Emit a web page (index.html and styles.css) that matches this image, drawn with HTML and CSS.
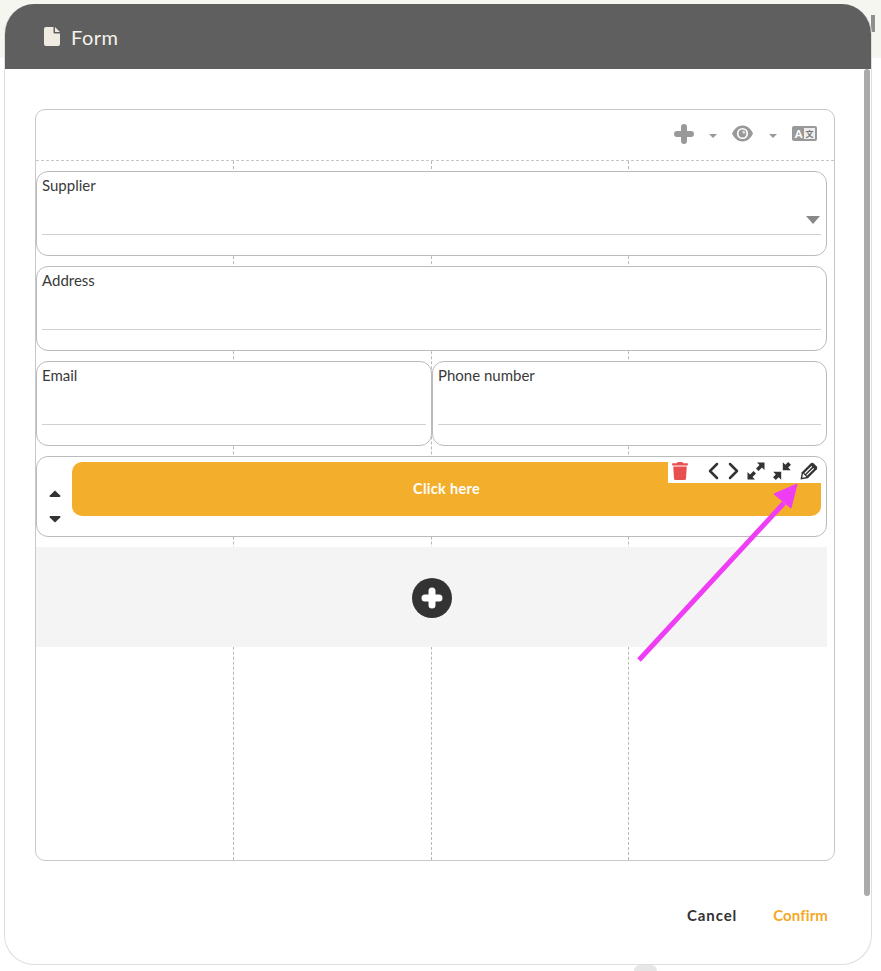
FILE: index.html
```html
<!DOCTYPE html>
<html lang="en">
<head>
<meta charset="utf-8">
<title>Form</title>
<link rel="stylesheet" href="styles.css">
</head>
<body>
<div class="scrap scrap-top"></div>
<div class="scrap scrap-bottom"></div>
<div class="modal">
  <header class="modal-head">
    <svg class="file-icon" viewBox="0 0 16 19"><path d="M2 0H9.500V5.500a1 1 0 0 0 1 1H16V17a2 2 0 0 1-2 2H2a2 2 0 0 1-2-2V2a2 2 0 0 1 2-2ZM11 0l5 5H11Z"/></svg>
    <span class="modal-title">Form</span>
  </header>
  <div class="modal-body">
    <div class="canvas">
      <div class="grid-lines"><i></i><i></i><i></i><i></i></div>
      <div class="toolbar">
        <svg class="tool-plus" viewBox="0 0 20 20"><path d="M10 3v14M3 10h14" fill="none" stroke="#999" stroke-width="6" stroke-linecap="round"/></svg>
        <span class="caret"></span>
        <svg class="tool-eye" viewBox="0 0 21 17"><path d="M10.500 .5C16 .5 19.500 5 21 8.500 19.500 12 16 16.500 10.500 16.500S1.500 12 0 8.500C1.500 5 5 .5 10.500 .5Z" fill="#999"/><circle cx="10.500" cy="8.500" r="5.600" fill="#fff"/><circle cx="10.500" cy="8.500" r="3.900" fill="#999"/><path d="M10.500 5.600a2.900 2.900 0 0 1 2.900 2.900h-2.900Z" fill="#ddd"/></svg>
        <span class="caret"></span>
        <span class="lang"><b>A</b><em>文</em></span>
      </div>
      <div class="rows">
        <div class="field">
          <label class="field-label">Supplier</label>
          <span class="select-arrow"></span>
          <div class="field-line"></div>
        </div>
        <div class="field">
          <label class="field-label">Address</label>
          <div class="field-line"></div>
        </div>
        <div class="pair">
          <div class="field">
            <label class="field-label">Email</label>
            <div class="field-line"></div>
          </div>
          <div class="field">
            <label class="field-label">Phone number</label>
            <div class="field-line"></div>
          </div>
        </div>
        <div class="button-row">
          <div class="sorter">
            <svg viewBox="0 0 12 8"><path d="M6 .6 11.200 5.600Q12 7 10.600 7H1.400Q0 7 .8 5.600Z"/></svg>
            <svg viewBox="0 0 12 8"><path d="M6 7.400 11.200 2.400Q12 1 10.600 1H1.400Q0 1 .8 2.400Z"/></svg>
          </div>
          <div class="cta">
            Click here
            <div class="cta-tools">
              <svg class="ico-trash" viewBox="0 0 448 512"><path d="M432 32H312l-9.400-18.700A24 24 0 0 0 281.100 0H166.800a23.720 23.720 0 0 0-21.400 13.300L136 32H16A16 16 0 0 0 0 48v32a16 16 0 0 0 16 16h416a16 16 0 0 0 16-16V48a16 16 0 0 0-16-16zM53.200 467a48 48 0 0 0 47.900 45h245.800a48 48 0 0 0 47.900-45L416 128H32z"/></svg>
              <svg class="ico-chev" viewBox="0 0 12 18"><path d="M10 2 3 9l7 7" fill="none" stroke="#333" stroke-width="2.500" stroke-linecap="round" stroke-linejoin="round"/></svg>
              <svg class="ico-chev ico-chev-next" viewBox="0 0 12 18"><path d="M2 2l7 7-7 7" fill="none" stroke="#333" stroke-width="2.500" stroke-linecap="round" stroke-linejoin="round"/></svg>
              <svg class="ico-arrows ico-expand" viewBox="0 0 18 18"><path d="M10 .5h7.500V8L15 5.500 11.500 9 9 6.500 12.500 3ZM8 17.500H.5V10L3 12.500 6.500 9 9 11.500 5.500 15Z"/></svg>
              <svg class="ico-arrows ico-compress" viewBox="0 0 18 18"><path d="M9.800 8.200V.2L12.400 2.800 15.200 0 18 2.800 15.200 5.600 17.800 8.200ZM8.200 9.800V17.800L5.600 15.200 2.800 18 0 15.200 2.800 12.400 .2 9.800Z"/></svg>
              <svg class="ico-arrows ico-pencil" viewBox="0 0 18 18"><path d="M1.800 10.200 10.800 1.200Q12.200.2 13.600 1.200L16.800 4.400Q17.800 5.800 16.800 7.200L7.800 16.200 .5 17.500Z"/><path d="M4.700 11.500 11.800 4.400M6.600 13.400 13.700 6.300" fill="none" stroke="#fff" stroke-width="1.200"/><path d="M3 11.600 6.400 15 2.300 15.700Z" fill="#fff"/></svg>
            </div>
          </div>
        </div>
        <div class="add-zone">
          <svg class="add-btn" viewBox="0 0 40 40"><circle cx="20" cy="20" r="20" fill="#333"/><path d="M20 13v14M13 20h14" fill="none" stroke="#fff" stroke-width="7" stroke-linecap="round"/></svg>
        </div>
      </div>
    </div>
    <footer class="modal-foot">
      <button class="btn btn-cancel">Cancel</button>
      <button class="btn btn-confirm">Confirm</button>
    </footer>
  </div>
  <div class="scrollbar"></div>
</div>
<svg class="callout" viewBox="0 0 881 971"><path d="M639 660 784 503" fill="none" stroke="#ee3df5" stroke-width="5"/><path d="M797 484 774 494 791 508Z" fill="#ee3df5" stroke="#ee3df5" stroke-width="1"/></svg>
</body>
</html>
```
FILE: styles.css
```css
* { box-sizing: border-box; }
html, body { margin: 0; height: 100%; }
body {
  position: relative;
  height: 971px;
  overflow: hidden;
  padding: 4px 0 0 4px;
  font-family: Lato, "Open Sans", sans-serif;
  color: #3a3a3a;
  background: linear-gradient(#f6f6f1 58px, #fff 58px);
}
.scrap { position: absolute; }
.scrap-top {
  left: 871px;
  top: 15px;
  width: 4px;
  height: 17px;
  background: #8f8f8f;
}
.scrap-bottom {
  left: 634px;
  top: 965px;
  width: 23px;
  height: 6px;
  border-radius: 8px 8px 0 0;
  background: #e6e6e6;
}
.modal {
  position: relative;
  width: 868px;
  height: 961px;
  display: flex;
  flex-direction: column;
  background: #fff;
  border: 1px solid #dedede;
  border-top: 0;
  border-radius: 30px;
  overflow: hidden;
}
.modal-head {
  flex: none;
  height: 65px;
  display: flex;
  align-items: center;
  gap: 11px;
  padding-left: 39px;
  background: #5f5f5f;
  color: #f5f2ea;
}
.file-icon { width: 16px; height: 19px; fill: #f0ece2; }
.modal-title { font-size: 20px; letter-spacing: .5px; }
.modal-body {
  flex: 1;
  display: flex;
  flex-direction: column;
  padding: 40px 37px 0 30px;
}
.canvas {
  position: relative;
  height: 752px;
  width: 800px;
  border: 1px solid #c8c8c8;
  border-radius: 10px;
}
.grid-lines {
  position: absolute;
  inset: 51px 0 0 0;
  display: grid;
  grid-template-columns: 198px 198px 197px 1fr;
}
.grid-lines i { border-right: 1px dashed #b8b8b8; }
.grid-lines i:last-child { border-right: 0; }
.toolbar {
  position: relative;
  height: 51px;
  display: flex;
  align-items: center;
  justify-content: flex-end;
  padding: 0 17px 3px 0;
  border-bottom: 1px dashed #c8c8c8;
}
.tool-plus { width: 20px; height: 20px; }
.tool-eye { width: 21px; height: 17px; margin-left: 15px; margin-right: 1px; }
.caret {
  width: 0;
  height: 0;
  margin: 5px 0 0 15px;
  border: 4px solid transparent;
  border-top: 4px solid #999;
  border-bottom: 0;
}
.lang {
  display: flex;
  width: 25px;
  height: 15px;
  margin-left: 15px;
  padding: 2px 2px 2px 1px;
  background: #999;
  border-radius: 2px;
  font-size: 11px;
  font-weight: 700;
  line-height: 11px;
  text-align: center;
}
.lang b { flex: 1; color: #fff; }
.lang em {
  flex: none;
  width: 11px;
  background: #eee;
  color: #777;
  font-style: normal;
  font-size: 8px;
  font-family: "Noto Sans CJK SC", sans-serif;
}
.rows {
  position: relative;
  width: 791px;
  display: flex;
  flex-direction: column;
  gap: 10px;
  padding-top: 10px;
}
.pair { display: grid; grid-template-columns: 396px 395px; }
.field {
  position: relative;
  height: 85px;
  padding: 4px 5px 0;
  background: #fff;
  border: 1px solid #bbb;
  border-radius: 12px;
}
.field-label {
  display: block;
  font-size: 15px;
  line-height: 18px;
}
.field-line {
  height: 1px;
  margin-top: 40px;
  background: #d0d0d0;
}
.select-arrow {
  position: absolute;
  right: 6px;
  top: 44px;
  border: 7px solid transparent;
  border-top: 8px solid #888;
  border-bottom: 0;
}
.button-row {
  display: flex;
  height: 81px;
  padding: 5px 5px 0 0;
  background: #fff;
  border: 1px solid #bbb;
  border-radius: 12px;
}
.sorter {
  flex: none;
  width: 35px;
  display: flex;
  flex-direction: column;
  align-items: center;
  gap: 15px;
  padding-top: 27px;
}
.sorter svg { width: 12px; height: 10px; fill: #333; }
.cta {
  position: relative;
  flex: 1;
  height: 54px;
  display: flex;
  align-items: center;
  justify-content: center;
  padding-bottom: 2px;
  background: #f3ae2b;
  border-radius: 10px;
  color: #fff;
  font-weight: 700;
  font-size: 14.5px;
  letter-spacing: .3px;
}
.cta-tools {
  position: absolute;
  top: 0;
  right: 0;
  width: 153px;
  height: 21px;
  display: flex;
  align-items: flex-start;
  padding-left: 4px;
  background: #fff;
}
.ico-trash { flex: none; width: 16px; height: 18px; fill: #e85050; margin-right: 19px; }
.ico-chev { flex: none; width: 12px; height: 18px; }
.ico-chev-next { margin-left: 9px; }
.ico-arrows { flex: none; width: 18px; height: 18px; fill: #333; }
.ico-expand { margin-left: 7px; }
.ico-compress { margin-left: 8px; }
.ico-pencil { margin-left: 9px; }
.add-zone {
  height: 100px;
  display: flex;
  align-items: center;
  justify-content: center;
  background: #f4f4f4;
  padding-top: 2px;
}
.add-btn { width: 40px; height: 40px; }
.modal-foot {
  display: flex;
  justify-content: flex-end;
  gap: 36px;
  width: 793px;
  margin-top: 44px;
}
.btn {
  padding: 0;
  border: 0;
  background: none;
  font: 700 15px/20px Lato, sans-serif;
  letter-spacing: .1px;
}
.btn-cancel { color: #333; letter-spacing: .9px; }
.btn-confirm { color: #f5a826; }
.scrollbar {
  position: absolute;
  right: 1px;
  top: 65px;
  width: 6px;
  height: 827px;
  border-radius: 3px;
  background: #aaa;
}
.callout {
  position: absolute;
  left: 0;
  top: 0;
  width: 881px;
  height: 971px;
  pointer-events: none;
}
```
